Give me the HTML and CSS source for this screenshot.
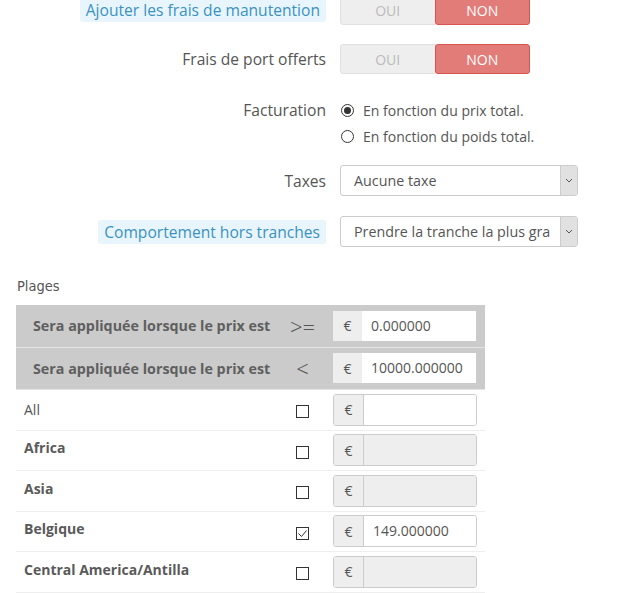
FILE: index.html
```html
<!DOCTYPE html>
<html lang="fr">
<head>
    <meta charset="UTF-8">
    <title>Transporteur - Frais</title>
    <link rel="stylesheet" href="styles.css">
</head>
<body>
    <div class="form">
        <div class="row first">
            <div class="label"><span class="hint">Ajouter les frais de manutention</span></div>
            <div class="toggle"><span>OUI</span><span class="on">NON</span></div>
        </div>
        <div class="row">
            <div class="label">Frais de port offerts</div>
            <div class="toggle"><span>OUI</span><span class="on">NON</span></div>
        </div>
        <div class="row top">
            <div class="label">Facturation</div>
            <div class="radios">
                <div class="radio-line"><span class="radio checked"></span>En fonction du prix total.</div>
                <div class="radio-line"><span class="radio"></span>En fonction du poids total.</div>
            </div>
        </div>
        <div class="row taxes">
            <div class="label">Taxes</div>
            <div class="select"><span class="value">Aucune taxe</span><span class="arrow"><svg width="8" height="5" viewBox="0 0 8 5"><path d="M1 1l3 3 3-3" fill="none" stroke="#555" stroke-width="1"/></svg></span></div>
        </div>
        <div class="row">
            <div class="label"><span class="hint">Comportement hors tranches</span></div>
            <div class="select"><span class="value">Prendre la tranche la plus grande</span><span class="arrow"><svg width="8" height="5" viewBox="0 0 8 5"><path d="M1 1l3 3 3-3" fill="none" stroke="#555" stroke-width="1"/></svg></span></div>
        </div>
    </div>

    <h3 class="plages">Plages</h3>

    <table class="ranges">
        <colgroup>
            <col class="c-name">
            <col class="c-op">
            <col class="c-amount">
        </colgroup>
        <tr class="head">
            <td class="name">Sera appliquée lorsque le prix est</td>
            <td class="op">&gt;=</td>
            <td class="amount"><div class="group"><span class="addon">€</span><span class="input">0.000000</span></div></td>
        </tr>
        <tr class="head">
            <td class="name">Sera appliquée lorsque le prix est</td>
            <td class="op">&lt;</td>
            <td class="amount"><div class="group"><span class="addon">€</span><span class="input">10000.000000</span></div></td>
        </tr>
        <tr>
            <td class="country">All</td>
            <td class="op"><span class="check"></span></td>
            <td class="amount"><div class="group boxed"><span class="addon">€</span><span class="input"></span></div></td>
        </tr>
        <tr>
            <td class="country"><strong>Africa</strong></td>
            <td class="op"><span class="check"></span></td>
            <td class="amount"><div class="group boxed off"><span class="addon">€</span><span class="input"></span></div></td>
        </tr>
        <tr>
            <td class="country"><strong>Asia</strong></td>
            <td class="op"><span class="check"></span></td>
            <td class="amount"><div class="group boxed off"><span class="addon">€</span><span class="input"></span></div></td>
        </tr>
        <tr>
            <td class="country"><strong>Belgique</strong></td>
            <td class="op"><span class="check"><svg width="11" height="11" viewBox="0 0 11 11"><path d="M1.5 5.5l3 3 5-6" fill="none" stroke="#333" stroke-width="1"/></svg></span></td>
            <td class="amount"><div class="group boxed"><span class="addon">€</span><span class="input">149.000000</span></div></td>
        </tr>
        <tr>
            <td class="country"><strong>Central America/Antilla</strong></td>
            <td class="op"><span class="check"></span></td>
            <td class="amount"><div class="group boxed off"><span class="addon">€</span><span class="input"></span></div></td>
        </tr>
    </table>
</body>
</html>
```

FILE: styles.css
```css
body {
    font-family: "Open Sans", "Liberation Sans", sans-serif;
    margin: 0;
    color: #555;
    background: #fff;
    overflow: hidden;
}
.form {
    width: 600px;
}
.row {
    display: flex;
    align-items: center;
    gap: 14px;
    margin-top: 19px;
}
.row.first {
    margin-top: -5px;
}
.row.top {
    align-items: flex-start;
    margin-top: 23px;
}
.row.taxes {
    margin-top: 16px;
}
.row + .row:last-child {
    margin-top: 20px;
}
.label {
    width: 326px;
    text-align: right;
    font-size: 15.6px;
    color: #555;
    line-height: 26px;
}
.hint {
    display: inline-block;
    background: #e9f5fc;
    color: #3a92c3;
    padding: 0 6px;
    border-radius: 3px;
    line-height: 24px;
}
.toggle {
    display: flex;
    width: 190px;
    height: 30px;
    font-size: 14px;
}
.toggle span {
    flex: 1;
    display: flex;
    align-items: center;
    justify-content: center;
    background: #eeeeee;
    color: #bbb;
    border: 1px solid #e0e0e0;
    border-radius: 3px 0 0 3px;
}
.toggle span.on {
    background: #e27c79;
    border-color: #d9534f;
    color: #fff;
    border-radius: 3px;
    margin-left: -1px;
}
.radios {
    font-size: 14px;
    color: #555;
}
.radio-line {
    display: flex;
    align-items: center;
    height: 26px;
    margin-left: 1px;
}
.radio {
    width: 11px;
    height: 11px;
    border: 1px solid #333;
    border-radius: 50%;
    margin-right: 9px;
    display: flex;
    align-items: center;
    justify-content: center;
}
.radio.checked::after {
    content: "";
    width: 7px;
    height: 7px;
    border-radius: 50%;
    background: #333;
}
.select {
    display: flex;
    width: 236px;
    height: 29px;
    border: 1px solid #ccc;
    border-radius: 3px;
    font-size: 14.3px;
    color: #555;
    overflow: hidden;
}
.select .value {
    flex: 1;
    padding-left: 13px;
    margin-right: 10px;
    line-height: 29px;
    white-space: nowrap;
    overflow: hidden;
}
.select .arrow {
    width: 16px;
    background: #e1e1e1;
    border-left: 1px solid #ccc;
    display: flex;
    align-items: center;
    justify-content: center;
}
.plages {
    font-family: "DejaVu Sans Condensed", "Liberation Sans Narrow", sans-serif;
    font-weight: normal;
    font-size: 14.5px;
    color: #555;
    margin: 30px 0 10px 17px;
    line-height: 18px;
}
.ranges {
    margin-left: 16px;
    width: 469px;
    table-layout: fixed;
    border-collapse: collapse;
    font-size: 14px;
}
.c-name {
    width: 264px;
}
.c-op {
    width: 45px;
}
.c-amount {
    width: 160px;
}
.ranges td {
    padding: 0;
    border-bottom: 1px solid #eee;
    height: 39.5px;
}
.ranges .head td {
    background: #cbcbcb;
    border-bottom: 1px solid #e4e4e4;
    height: 41.5px;
}
.head .name {
    font-weight: bold;
    font-size: 14.3px;
    color: #5f5f5f;
    padding-left: 17px;
    white-space: nowrap;
}
.op {
    text-align: center;
}
.head .op {
    font-size: 22px;
    font-weight: 300;
    color: #555;
}
.country {
    padding-left: 8px !important;
    color: #555;
}
.country strong {
    display: block;
    margin-bottom: 5px;
    color: #5a5a5a;
}
.check {
    display: inline-flex;
    align-items: center;
    justify-content: center;
    width: 11px;
    height: 11px;
    border: 1px solid #333;
    vertical-align: middle;
}
.group {
    display: flex;
    width: 143px;
    height: 30px;
    margin-left: 8px;
}
.group .addon {
    width: 29px;
    background: #eee;
    display: flex;
    align-items: center;
    justify-content: center;
    color: #555;
}
.group .input {
    flex: 1;
    background: #fff;
    padding-left: 9px;
    line-height: 30px;
    white-space: nowrap;
    overflow: hidden;
    color: #555;
}
.group.boxed {
    border: 1px solid #ccc;
    border-radius: 3px;
    overflow: hidden;
    width: 142px;
}
.group.boxed .addon {
    border-right: 1px solid #ccc;
}
.group.off .input {
    background: #eee;
}
```
